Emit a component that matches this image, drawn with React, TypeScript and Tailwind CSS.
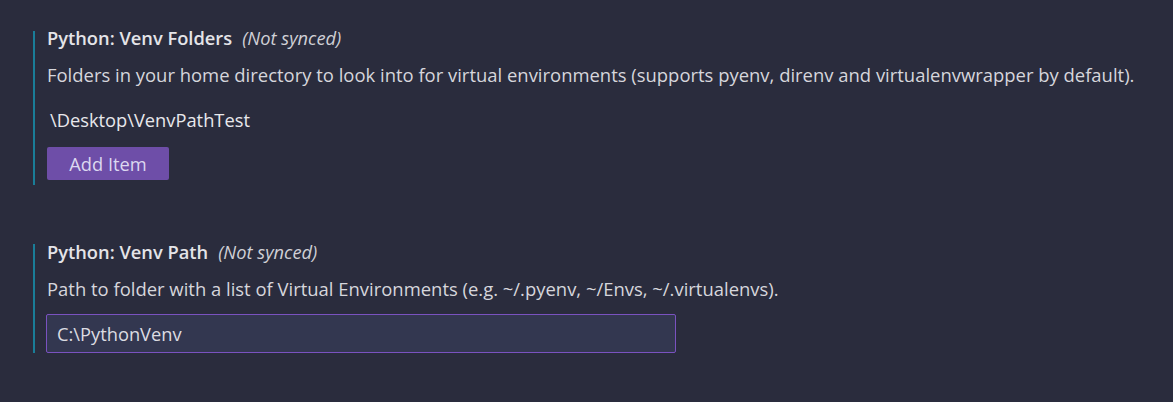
export default function App() {
  const font = { fontFamily: '"Segoe UI", "Open Sans", "Noto Sans", sans-serif' };
  return (
    <div className="w-[1173px] h-[402px] bg-[#2a2c3d] pt-[31px] pl-[33px] text-[18.3px] text-[#d6d6dc]" style={font}>
      <div className="border-l-2 border-[#1a7d98] pl-[12px] pb-[5px]">
        <div className="leading-[14px] flex items-center">
          <span className="font-semibold text-[#e4e4e8]">Python: Venv Folders</span>
          <span className="italic ml-[10px] text-[#d0d0d6]">(Not synced)</span>
        </div>
        <div className="mt-[19px] leading-[22px] text-[18.45px]">
          Folders in your home directory to look into for virtual environments (supports pyenv, direnv and virtualenvwrapper by default).
        </div>
        <div className="mt-[23px] leading-[22px] pl-[3px] text-[#e8e8ec]">\Desktop\VenvPathTest</div>
        <button className="mt-[16px] h-[33px] w-[122px] bg-[#6e4ea8] rounded-[2px] text-[#dcd8f0] leading-[33px] text-center">
          Add Item
        </button>
      </div>
      <div className="mt-[59px] border-l-2 border-[#1a7d98] pl-[12px] pt-[1px]">
        <div className="leading-[14px] flex items-center">
          <span className="font-semibold text-[#e4e4e8]">Python: Venv Path</span>
          <span className="italic ml-[10px] text-[#d0d0d6]">(Not synced)</span>
        </div>
        <div className="mt-[19px] leading-[22px] text-[18.45px]">
          Path to folder with a list of Virtual Environments (e.g. ~/.pyenv, ~/Envs, ~/.virtualenvs).
        </div>
        <div className="mt-[14px] h-[39px] w-[630px] -ml-[1px] bg-[#333750] border border-[#7a52c0] rounded-[2px] pl-[10px] flex items-center text-[#dcdce2]">
          C:\PythonVenv
        </div>
      </div>
    </div>
  );
}
